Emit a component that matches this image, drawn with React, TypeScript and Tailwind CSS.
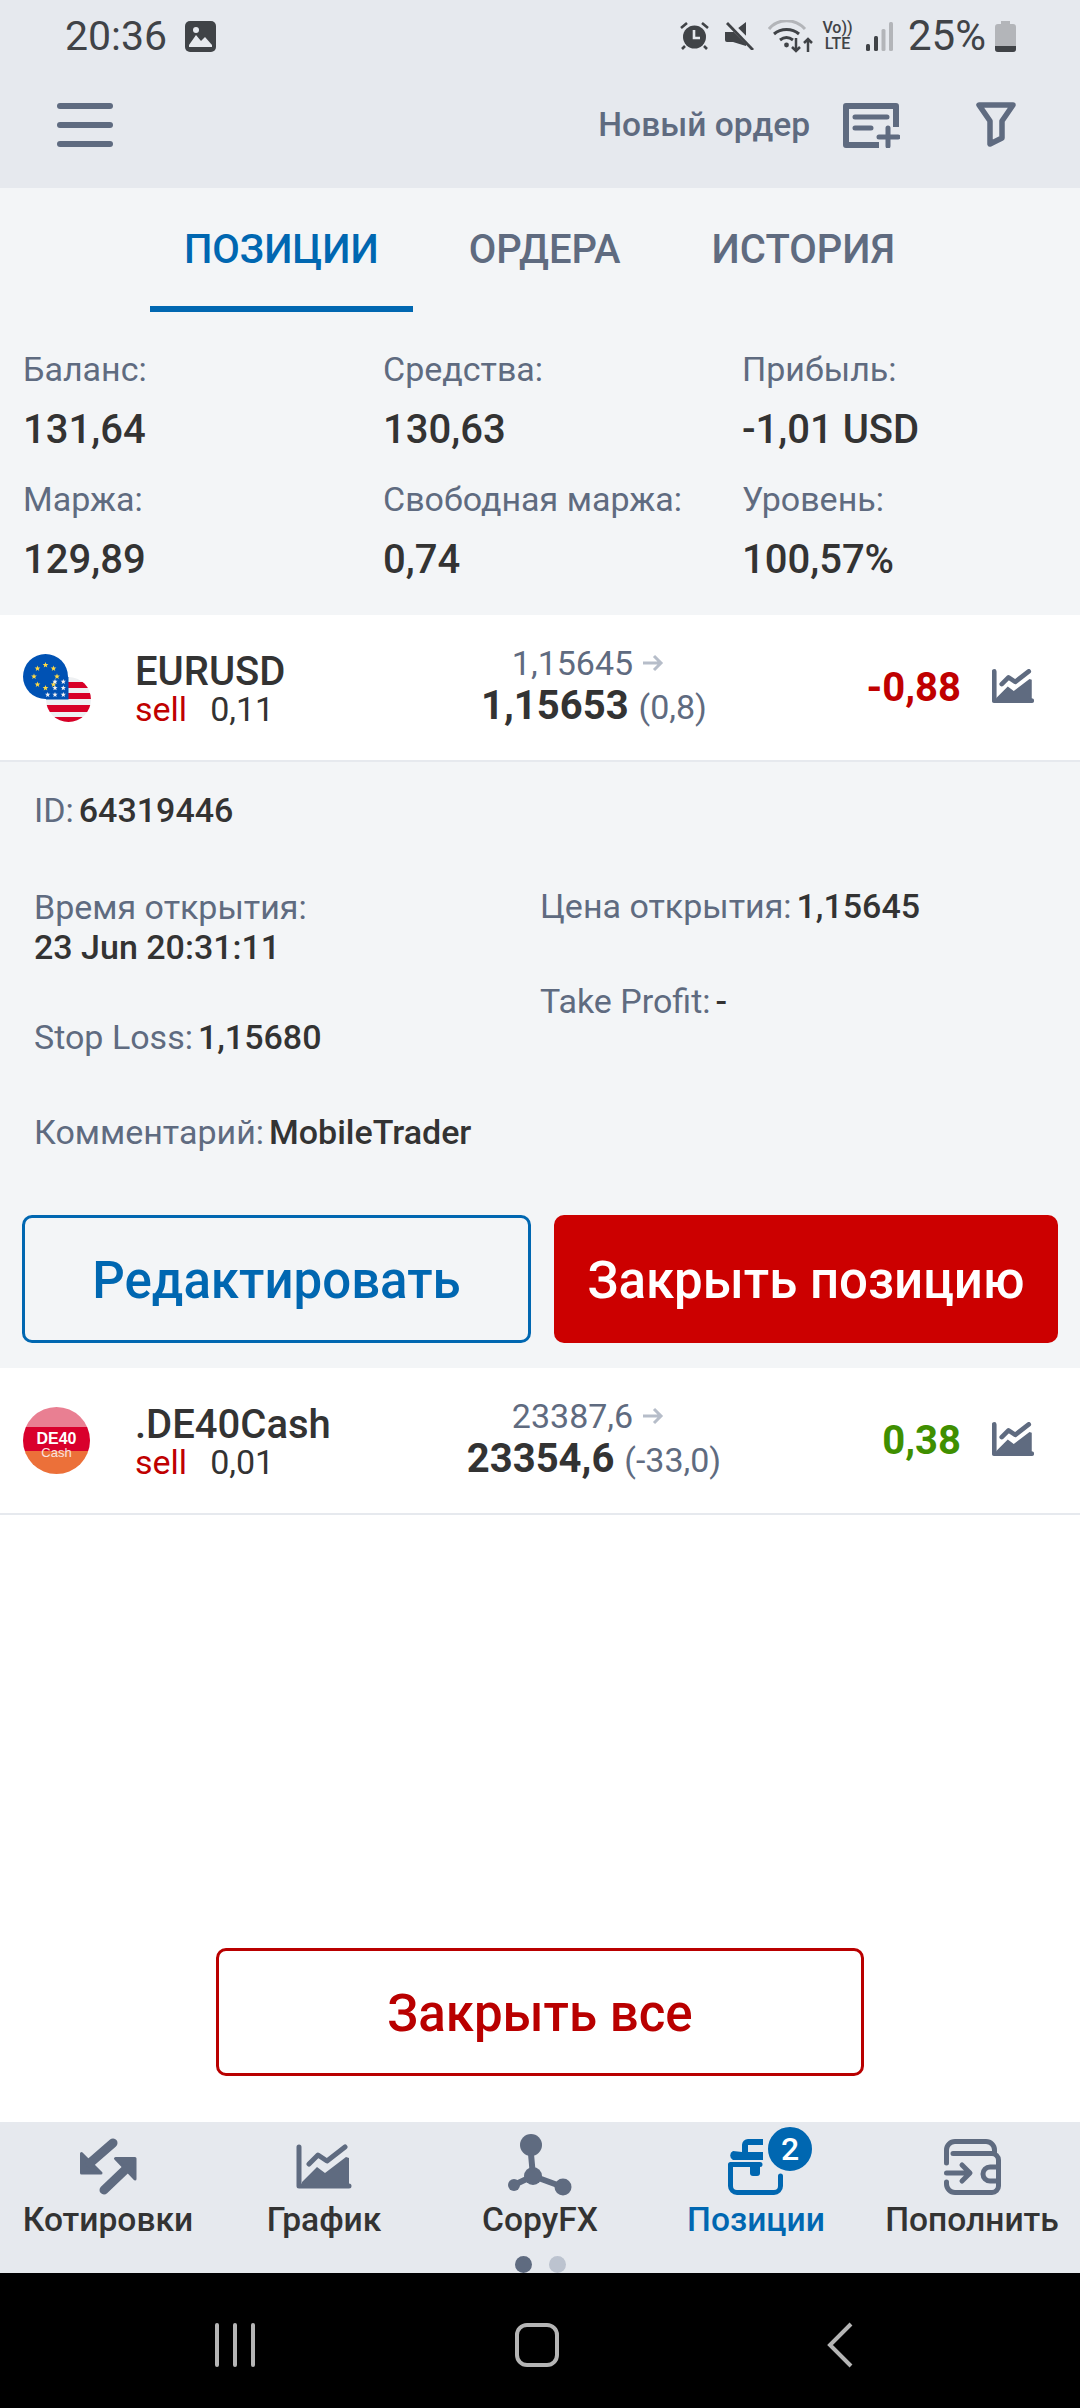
import React from "react";

const slate = "#5f6b80";
const ink = "#404347";

function Alarm() {
  return (
    <svg width="29" height="28" viewBox="0 0 29 28" className="block">
      <circle cx="14.5" cy="15" r="11.5" fill={ink} />
      <path d="M14 8v8h6" stroke="#e6e9ee" strokeWidth="2.6" fill="none" />
      <path d="M1 6l6-5M28 6l-6-5M5 24l-3 3M24 24l3 3" stroke={ink} strokeWidth="2.6" fill="none" />
    </svg>
  );
}
function Mute() {
  return (
    <svg width="29" height="28" viewBox="0 0 29 28" className="block">
      <path d="M0 10h8L21 0v24L8 20H2a2 2 0 01-2-2z" fill={ink} />
      <path d="M2 -1l27 27" stroke="#e6e9ee" strokeWidth="6" />
      <path d="M2 1l26 27" stroke={ink} strokeWidth="2.8" />
    </svg>
  );
}
function Wifi() {
  return (
    <svg width="46" height="33" viewBox="0 0 46 33" className="block">
      <path d="M1 9C10 -2 27 -2 37 9" stroke="#b3b5b9" strokeWidth="3" fill="none" />
      <path d="M6 14c7-6 18-6 25 0" stroke={ink} strokeWidth="3" fill="none" />
      <path d="M12 20c4-3 9-3 13 0" stroke={ink} strokeWidth="3" fill="none" />
      <circle cx="18.5" cy="25" r="2.4" fill={ink} />
      <path d="M28 18v13M24 27l4 4 4-4M40 32V19M36 23l4-4 4 4" stroke={ink} strokeWidth="2.5" fill="none" />
    </svg>
  );
}
function Signal() {
  return (
    <svg width="27" height="29" viewBox="0 0 27 29" className="block">
      <rect x="0" y="22" width="4" height="7" rx="1.5" fill={ink} />
      <rect x="8" y="14" width="4" height="15" rx="1.5" fill={ink} />
      <rect x="15.5" y="7" width="4" height="22" rx="1.5" fill="#b3b5b9" />
      <rect x="23" y="0" width="4" height="29" rx="1.5" fill="#b3b5b9" />
    </svg>
  );
}
function Battery() {
  return (
    <svg width="21" height="31" viewBox="0 0 21 31" className="block">
      <path d="M6 0h9v3h3a3 3 0 013 3v22a3 3 0 01-3 3H3a3 3 0 01-3-3V6a3 3 0 013-3h3z" fill="#b3b5b9" />
      <path d="M0 25h21v3a3 3 0 01-3 3H3a3 3 0 01-3-3z" fill={ink} />
    </svg>
  );
}
function ChartIcon({ w = 42, h = 34, sw = 6.2 }: { w?: number; h?: number; sw?: number }) {
  return (
    <svg width={w} height={h} viewBox="0 0 56 45" className="block">
      <path d="M3 3V42H53" stroke={slate} strokeWidth={sw} strokeLinecap="round" strokeLinejoin="round" fill="none" />
      <path d="M6 38L21 23l8 6 21-16 3 1v28H6z" fill={slate} />
      <path d="M13 20l9-9 9 6L49 3" stroke={slate} strokeWidth={sw} strokeLinecap="round" strokeLinejoin="round" fill="none" />
    </svg>
  );
}
function MiniArrow() {
  return (
    <svg width="22" height="18" viewBox="0 0 22 18" className="block">
      <path d="M1 9h18M12 2l7 7-7 7" stroke="#b6bdc9" strokeWidth="3" fill="none" />
    </svg>
  );
}
function starPoints(cx: number, cy: number, r: number) {
  const pts: string[] = [];
  for (let i = 0; i < 10; i++) {
    const a = -Math.PI / 2 + (i * Math.PI) / 5;
    const rr = i % 2 === 0 ? r : r * 0.42;
    pts.push(`${cx + rr * Math.cos(a)},${cy + rr * Math.sin(a)}`);
  }
  return pts.join(" ");
}
function EuUs() {
  const ring: [number, number][] = [
    [22.5, 11], [30.5, 14.5], [34, 22.5], [30.5, 30.5], [22.5, 34], [14.5, 30.5], [11, 22.5], [14.5, 14.5],
  ];
  const white: [number, number][] = [
    [40.3, 27.7], [32, 27.7], [32, 34], [40.3, 34], [24.7, 40.7], [32, 40.7], [40.3, 40.7],
  ];
  return (
    <svg width="68" height="68" viewBox="0 0 68 68" className="block">
      <defs>
        <clipPath id="us"><circle cx="45.5" cy="45.5" r="22.5" /></clipPath>
      </defs>
      <g clipPath="url(#us)">
        <rect x="23" y="23" width="45" height="45" fill="#eef0f2" />
        <rect x="23" y="28" width="45" height="6" fill="#d80027" />
        <rect x="23" y="39" width="45" height="6" fill="#d80027" />
        <rect x="23" y="51" width="45" height="7" fill="#d80027" />
        <rect x="23" y="63" width="45" height="5" fill="#d80027" />
      </g>
      <circle cx="22.5" cy="22.5" r="22.5" fill="#0052b4" />
      <g clipPath="url(#us)">
        <rect x="23" y="23" width="22.5" height="22.5" fill="#0052b4" />
      </g>
      {ring.map(([x, y], i) => (
        <polygon key={i} points={starPoints(x, y, 3)} fill="#ffda44" />
      ))}
      {white.map(([x, y], i) => (
        <polygon key={i} points={starPoints(x, y, 2.8)} fill="#f0f0f0" />
      ))}
    </svg>
  );
}
function De40() {
  return (
    <div className="w-[67px] h-[67px] rounded-full overflow-hidden flex flex-col items-center text-white" style={{ fontFamily: '"Liberation Sans", sans-serif' }}>
      <div className="h-[20px] w-full bg-[#e97f92] shrink-0" />
      <div className="h-[24px] w-full bg-[#d9002c] shrink-0 flex items-center justify-center text-[16px] leading-none font-bold">DE40</div>
      <div className="h-[23px] w-full bg-[#ec7039] shrink-0 flex justify-center">
        <span className="text-[13px] leading-[14px] -mt-[5px] text-[#fbe3e0]">Cash</span>
      </div>
    </div>
  );
}
function RowCore({
  icon, sym, lot, open, cur, diff, pl, plColor,
}: { icon: React.ReactNode; sym: string; lot: string; open: string; cur: string; diff: string; pl: string; plColor: string }) {
  return (
    <div className="h-[147px] bg-white border-b-2 border-[#e6e9ee] flex items-center shrink-0">
      <div className="w-[135px] pl-[23px] shrink-0">{icon}</div>
      <div className="w-[300px] shrink-0 flex flex-col">
        <div className="text-[40px] leading-[38px] mt-[4px] font-medium text-[#333]">{sym}</div>
        <div className="text-[34px] leading-[36px] text-[#333]">
          <span className="text-[#c00000] mr-[23px]">sell</span>
          {lot}
        </div>
      </div>
      <div className="w-[318px] shrink-0 flex flex-col items-center pb-[2px]">
        <div className="text-[34px] leading-[40px] flex items-center gap-[9px] pr-[12px]" style={{ color: slate }}>
          {open}
          <MiniArrow />
        </div>
        <div className="text-[40px] leading-[46px] font-bold text-[#333] whitespace-nowrap">
          {cur} <span className="text-[34px] font-normal" style={{ color: slate }}>{diff}</span>
        </div>
      </div>
      <div className="flex-1 flex items-center justify-end pr-[46px] gap-[31px]">
        <div className="text-[40px] font-bold leading-none" style={{ color: plColor }}>{pl}</div>
        <div className="pb-[3px]"><ChartIcon /></div>
      </div>
    </div>
  );
}
function Stat({ label, value }: { label: string; value: string }) {
  return (
    <div className="h-[130px]">
      <div className="text-[34px] leading-[38px] text-[#5f6b80]">{label}</div>
      <div className="text-[40px] leading-[44px] mt-[20px] font-medium text-[#333]">{value}</div>
    </div>
  );
}
function Kv({ k, v }: { k: string; v: string }) {
  return (
    <div className="text-[34px] leading-[38px] whitespace-nowrap">
      <span className="text-[#5f6b80]">{k}</span>
      <span className="font-medium text-[#333] ml-[5px]">{v}</span>
    </div>
  );
}
function NavItem({ icon, label, active }: { icon: React.ReactNode; label: string; active?: boolean }) {
  return (
    <div className="flex-1 flex flex-col items-center">
      <div className="h-[57px] flex items-center justify-center">{icon}</div>
      <div className={"text-[33.6px] leading-[40px] mt-[5px] font-medium whitespace-nowrap " + (active ? "text-[#0067b1]" : "text-[#333]")}>{label}</div>
    </div>
  );
}

export default function App() {
  return (
    <div className="w-[1080px] h-[2408px] flex flex-col bg-white overflow-hidden" style={{ fontFamily: "Roboto, sans-serif" }}>
      <div className="h-[188px] bg-[#e6e9ee] shrink-0 flex flex-col">
        <div className="h-[72px] pl-[65px] pr-[64px] flex items-center text-[#404347] text-[41px]">
          <span className="leading-none">20:36</span>
          <svg width="31" height="31" viewBox="0 0 31 31" className="ml-[18px]">
            <rect width="31" height="31" rx="5" fill={ink} />
            <path d="M4 24l7-10 5 6 4-4 7 8v2H4z" fill="#e6e9ee" />
            <circle cx="11" cy="9" r="3" fill="#e6e9ee" />
          </svg>
          <div className="flex-1" />
          <Alarm />
          <div className="ml-[16px]"><Mute /></div>
          <div className="ml-[14px]"><Wifi /></div>
          <div className="ml-[8px] w-[31px] text-[16px] leading-[16px] font-medium text-center whitespace-nowrap">
            Vo))<br />LTE
          </div>
          <div className="ml-[13px]"><Signal /></div>
          <span className="ml-[15px] text-[42px] leading-none">25%</span>
          <div className="ml-[9px]"><Battery /></div>
        </div>
        <div className="flex-1 flex items-center pl-[57px] pr-[64px] pb-[10px]">
          <div className="flex flex-col gap-[13px]">
            <div className="w-[56px] h-[6px] rounded-sm bg-[#5f6b80]" />
            <div className="w-[56px] h-[6px] rounded-sm bg-[#5f6b80]" />
            <div className="w-[56px] h-[6px] rounded-sm bg-[#5f6b80]" />
          </div>
          <div className="flex-1" />
          <span className="text-[33.6px] font-medium text-[#5f6b80] leading-none">Новый ордер</span>
          <svg width="57" height="45" viewBox="0 0 57 45" className="ml-[33px]">
            <path d="M36 42H3V3h50v21" stroke={slate} strokeWidth="6" fill="none" strokeLinejoin="round" />
            <path d="M12 14h32M12 25h16M36 34h19M45 25v18" stroke={slate} strokeWidth="5" strokeLinecap="round" fill="none" />
          </svg>
          <svg width="40" height="46" viewBox="0 0 40 46" className="ml-[76px]">
            <path d="M3 3H37L26 19V36L14 42V19Z" stroke={slate} strokeWidth="5.5" fill="none" strokeLinejoin="round" />
          </svg>
        </div>
      </div>

      <div className="bg-[#f3f5f7] h-[427px] shrink-0 flex flex-col">
        <div className="h-[124px] flex justify-center gap-[21px] text-[40px] font-medium text-[#5f6b80]">
          <div className="px-[34px] h-full flex items-center border-b-[6px] border-[#0067b1] text-[#0067b1] pt-[6px]">ПОЗИЦИИ</div>
          <div className="px-[35px] h-full flex items-center border-b-[6px] border-transparent pt-[6px]">ОРДЕРА</div>
          <div className="px-[35px] h-full flex items-center border-b-[6px] border-transparent pt-[6px]">ИСТОРИЯ</div>
        </div>
        <div className="grid grid-cols-[360px_359px_1fr] pl-[23px] pt-[38px]">
          <Stat label="Баланс:" value="131,64" />
          <Stat label="Средства:" value="130,63" />
          <Stat label="Прибыль:" value="-1,01 USD" />
          <Stat label="Маржа:" value="129,89" />
          <Stat label="Свободная маржа:" value="0,74" />
          <Stat label="Уровень:" value="100,57%" />
        </div>
      </div>

      <RowCore icon={<EuUs />} sym="EURUSD" lot="0,11" open="1,15645" cur="1,15653" diff="(0,8)" pl="-0,88" plColor="#c00000" />

      <div className="bg-[#f3f5f7] h-[606px] shrink-0 flex flex-col">
        <div className="pl-[34px] pt-[29px]">
          <Kv k="ID:" v="64319446" />
        </div>
        <div className="flex pl-[34px] pt-[58px]">
          <div className="w-[506px]">
            <div className="text-[34px] leading-[40px] text-[#5f6b80]">Время открытия:</div>
            <div className="text-[34px] leading-[40px] font-medium text-[#333]">23 Jun 20:31:11</div>
            <div className="mt-[51px]"><Kv k="Stop Loss:" v="1,15680" /></div>
          </div>
          <div>
            <Kv k="Цена открытия:" v="1,15645" />
            <div className="mt-[57px]"><Kv k="Take Profit:" v="-" /></div>
          </div>
        </div>
        <div className="pl-[34px] pt-[57px]">
          <Kv k="Комментарий:" v="MobileTrader" />
        </div>
        <div className="flex px-[22px] gap-[23px] mt-[64px]">
          <div className="w-[509px] h-[128px] pt-[4px] rounded-[10px] border-[3px] border-[#0067b1] flex items-center justify-center text-[51px] font-medium text-[#0067b1]">Редактировать</div>
          <div className="flex-1 h-[128px] pt-[4px] rounded-[10px] bg-[#cc0000] flex items-center justify-center text-[51px] font-medium text-white">Закрыть позицию</div>
        </div>
      </div>

      <RowCore icon={<De40 />} sym=".DE40Cash" lot="0,01" open="23387,6" cur="23354,6" diff="(-33,0)" pl="0,38" plColor="#3f8f00" />

      <div className="flex-1 flex flex-col justify-end items-center pb-[46px]">
        <div className="w-[648px] h-[128px] pt-[4px] rounded-[10px] border-[3px] border-[#b90000] flex items-center justify-center text-[51px] font-medium text-[#b90000]">Закрыть все</div>
      </div>

      <div className="h-[151px] bg-[#e6e9ee] shrink-0 relative">
        <div className="flex pt-[16px]">
          <NavItem label="Котировки" icon={
            <svg width="57" height="57" viewBox="0 0 57 57">
              <path d="M1.5 15.5V35H21Z" fill={slate} stroke={slate} strokeWidth="3" strokeLinejoin="round" />
              <path d="M10 25L33 5" stroke={slate} strokeWidth="9" strokeLinecap="round" />
              <path d="M35.5 20.5H55V41Z" fill={slate} stroke={slate} strokeWidth="3" strokeLinejoin="round" />
              <path d="M46 31L24 52" stroke={slate} strokeWidth="9" strokeLinecap="round" />
            </svg>
          } />
          <NavItem label="График" icon={<ChartIcon w={56} h={45} sw={5} />} />
          <NavItem label="CopyFX" icon={
            <svg width="70" height="65" viewBox="0 0 70 65" className="-my-[4px]">
              <path d="M26 20L28 42L9 51M28 42L58 53" stroke={slate} strokeWidth="6" fill="none" />
              <circle cx="26" cy="11" r="11" fill={slate} />
              <circle cx="28" cy="42" r="9" fill={slate} />
              <circle cx="9" cy="51" r="6" fill={slate} />
              <circle cx="58" cy="53" r="8.5" fill={slate} />
            </svg>
          } />
          <NavItem active label="Позиции" icon={
            <svg width="56" height="56" viewBox="0 0 56 56">
              <path d="M14 13V6a6 6 0 016-6h15v6H20v7h15v8H5a5 5 0 010-9z" fill="#0067b1" />
              <path d="M2.5 25.5H32M2.5 25.5V47a6.5 6.5 0 006.5 6.5h37a6.5 6.5 0 006.5-6.5V37" stroke="#0067b1" strokeWidth="5" fill="none" strokeLinecap="round" />
              <path d="M22 27h10v7a3 3 0 01-3 3h-4a3 3 0 01-3-3z" fill="#0067b1" />
            </svg>
          } />
          <NavItem label="Пополнить" icon={
            <svg width="57" height="56" viewBox="0 0 57 56">
              <path d="M2.5 24V11a8.5 8.5 0 018.5-8.5h31A8.5 8.5 0 0150.5 11v3.5H9" stroke={slate} strokeWidth="5" fill="none" strokeLinecap="round" />
              <path d="M48 14.5a6.5 6.5 0 016.5 6.5v26a6.5 6.5 0 01-6.5 6.500H11A8.500 8.500 0 012.500 45v-2" stroke={slate} strokeWidth="5" fill="none" strokeLinecap="round" />
              <path d="M2.500 34H25M18 26l8 8-8 8" stroke={slate} strokeWidth="5" fill="none" strokeLinecap="round" strokeLinejoin="round" />
              <path d="M55 28h-9a7 7 0 000 14h9" stroke={slate} strokeWidth="5" fill="none" />
            </svg>
          } />
        </div>
        <div className="absolute left-[766px] top-[3px] w-[48px] h-[48px] rounded-full bg-[#0067b1] border-[2px] border-[#e6e9ee] text-white text-[32px] leading-none font-medium flex items-center justify-center">2</div>
        <div className="absolute left-[515px] top-[134px] flex gap-[17px] h-[17px] overflow-hidden">
          <div className="w-[17px] h-[17px] rounded-full bg-[#5f6b80]" />
          <div className="w-[17px] h-[17px] rounded-full bg-[#bcc3cf]" />
        </div>
      </div>

      <div className="h-[135px] bg-black shrink-0 relative">
        <div className="absolute left-[215px] top-[50px] flex gap-[14px]">
          <div className="w-[4px] h-[44px] rounded bg-[#b5b5b5]" />
          <div className="w-[4px] h-[44px] rounded bg-[#b5b5b5]" />
          <div className="w-[4px] h-[44px] rounded bg-[#b5b5b5]" />
        </div>
        <div className="absolute left-[515px] top-[50px] w-[44px] h-[44px] rounded-[12px] border-[4px] border-[#b5b5b5]" />
        <svg width="28" height="46" viewBox="0 0 28 46" className="absolute left-[826px] top-[49px]">
          <path d="M25 2L4 23l21 21" stroke="#b5b5b5" strokeWidth="4" fill="none" />
        </svg>
      </div>
    </div>
  );
}
